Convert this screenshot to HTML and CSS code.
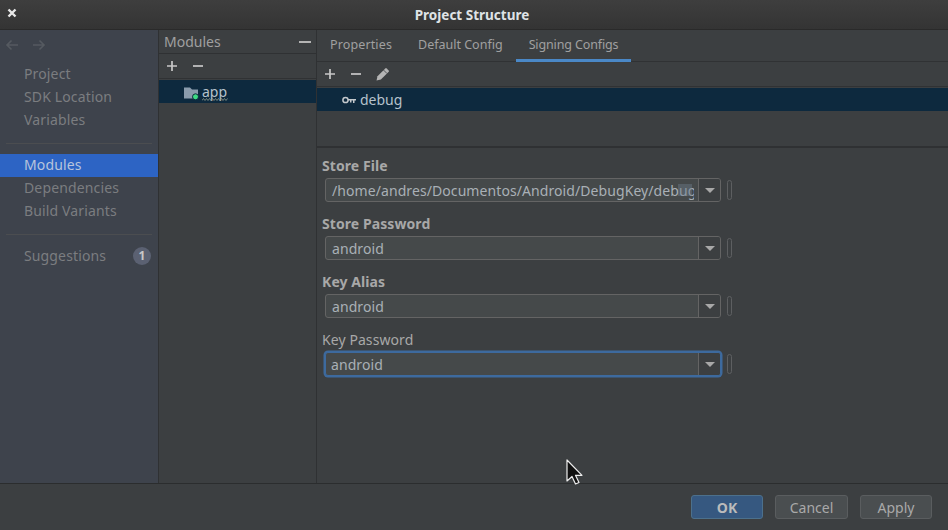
FILE: index.html
```html
<!DOCTYPE html>
<html lang="en">
<head>
<meta charset="utf-8">
<title>Project Structure</title>
<link rel="stylesheet" href="styles.css">
</head>
<body>
<div class="window">
  <header class="titlebar">
    <svg class="close" width="10" height="10" viewBox="0 0 10 10"><path d="M1.5 1.5l7 7M8.500 1.500l-7 7" stroke="#e8e8e8" stroke-width="2.400"/></svg>
    <div class="title">Project Structure</div>
  </header>
  <div class="main">
    <nav class="sidebar">
      <div class="history">
        <svg width="14" height="12" viewBox="0 0 14 12"><path d="M13 6H2M6.500 1.500L2 6l4.500 4.500" fill="none" stroke="#555a60" stroke-width="1.600"/></svg>
        <svg width="14" height="12" viewBox="0 0 14 12"><path d="M1 6h11M7.500 1.500L12 6l-4.500 4.500" fill="none" stroke="#555a60" stroke-width="1.600"/></svg>
      </div>
      <div class="nav-item">Project</div>
      <div class="nav-item">SDK Location</div>
      <div class="nav-item">Variables</div>
      <div class="nav-sep"></div>
      <div class="nav-item raised selected">Modules</div>
      <div class="nav-item raised">Dependencies</div>
      <div class="nav-item raised">Build Variants</div>
      <div class="nav-sep second"></div>
      <div class="nav-item with-badge">Suggestions<span class="badge">1</span></div>
    </nav>
    <section class="modules">
      <div class="modules-head"><span>Modules</span><i class="dash"></i></div>
      <div class="toolbar tool-modules">
        <svg width="12" height="12" viewBox="0 0 12 12"><path d="M6 1v10M1 6h10" stroke="#c8c8c8" stroke-width="1.700"/></svg>
        <svg width="12" height="12" viewBox="0 0 12 12"><path d="M1 6h10" stroke="#c8c8c8" stroke-width="1.700"/></svg>
      </div>
      <div class="tree-row app-row">
        <svg class="folder" width="15" height="16" viewBox="0 0 15 16"><path d="M0 3.500h6l2 2h6v9H0z" fill="#8a9bac"/><circle cx="11.500" cy="12.800" r="3" fill="#3ddc84" stroke="#0d293e" stroke-width="1"/></svg>
        <span class="app-name">app<svg class="squiggle" width="26" height="3" viewBox="0 0 26 3"><path d="M0 2.500l1.500-2 1.500 2 1.500-2 1.500 2 1.500-2 1.500 2 1.500-2 1.500 2 1.500-2 1.500 2 1.500-2 1.500 2 1.500-2 1.500 2 1.500-2 1.500 2 1.500-2" fill="none" stroke="#8f9a8e" stroke-width=".8"/></svg></span>
      </div>
    </section>
    <section class="content">
      <div class="tabs">
        <div class="tab first">Properties</div>
        <div class="tab">Default Config</div>
        <div class="tab active">Signing Configs</div>
      </div>
      <div class="toolbar tool-config">
        <svg width="12" height="12" viewBox="0 0 12 12"><path d="M6 1v10M1 6h10" stroke="#c8c8c8" stroke-width="1.700"/></svg>
        <svg width="12" height="12" viewBox="0 0 12 12"><path d="M1 6h10" stroke="#c8c8c8" stroke-width="1.700"/></svg>
        <svg width="14" height="14" viewBox="0 0 14 14"><path d="M0.500 13.500l1-4.300L9.300 1.400a1 1 0 0 1 1.400 0l2 2a1 1 0 0 1 0 1.400L4.900 12.500z" fill="#b4b4b4"/><path d="M7.600 3.100l3.400 3.400" stroke="#3c3f41" stroke-width=".8"/></svg>
      </div>
      <div class="config-list">
        <div class="tree-row debug-row">
          <svg width="14" height="8" viewBox="0 0 14 8"><circle cx="3.500" cy="4" r="2.600" fill="none" stroke="#c4c8cc" stroke-width="1.500"/><path d="M6 3h8v1.600h-1.500V7h-1.500V4.600H9.500V6.500H8V4.600H6z" fill="#c4c8cc"/></svg>
          <span>debug</span>
        </div>
      </div>
      <form class="form">
        <div class="field">
          <label class="strong">Store File</label>
          <div class="field-row">
            <div class="combo"><span class="value clip">/home/andres/Documentos/Android/DebugKey/debug.jks</span><i class="file-mark"></i><span class="arrow"><i></i></span></div>
            <i class="pill"></i>
          </div>
        </div>
        <div class="field">
          <label class="strong">Store Password</label>
          <div class="field-row">
            <div class="combo"><span class="value">android</span><span class="arrow"><i></i></span></div>
            <i class="pill"></i>
          </div>
        </div>
        <div class="field">
          <label class="strong">Key Alias</label>
          <div class="field-row">
            <div class="combo"><span class="value">android</span><span class="arrow"><i></i></span></div>
            <i class="pill"></i>
          </div>
        </div>
        <div class="field">
          <label>Key Password</label>
          <div class="field-row">
            <div class="combo focused"><span class="value">android</span><span class="arrow"><i></i></span></div>
            <i class="pill"></i>
          </div>
        </div>
      </form>
    </section>
  </div>
  <footer class="footer">
    <button class="btn primary" type="button">OK</button>
    <button class="btn cancel" type="button">Cancel</button>
    <button class="btn apply" type="button">Apply</button>
  </footer>
  <svg class="cursor" width="20" height="28" viewBox="0 0 20 28"><path d="M2 1v21l5-4.500 3.500 7.500 3.500-1.500-3.500-7.200h6.500z" fill="#111" stroke="#eee" stroke-width="1.200" stroke-linejoin="round"/></svg>
</div>
</body>
</html>
```
FILE: styles.css
```css
* { box-sizing: border-box; }
html, body { margin: 0; padding: 0; }
body {
  width: 948px;
  height: 530px;
  overflow: hidden;
  background: #3c3f41;
  font-family: "Noto Sans", sans-serif;
  font-size: 14px;
  color: #a9a9a9;
}
.window {
  position: relative;
  width: 948px;
  height: 530px;
  display: flex;
  flex-direction: column;
}
.titlebar {
  height: 30px;
  flex: none;
  display: flex;
  align-items: center;
  justify-content: center;
  position: relative;
  background: linear-gradient(#3e3e3e, #343434);
  border-bottom: 1px solid #2a2a2a;
}
.close { position: absolute; left: 7px; top: 8px; }
.title { font-weight: 700; font-size: 13.500px; color: #dfe3e6; transform: translateX(-2px); }
.main { flex: 1; display: flex; min-height: 0; }
.sidebar {
  width: 159px;
  flex: none;
  background: #3e434c;
  border-right: 1px solid #2f3133;
  color: #7b7d80;
  letter-spacing: .14px;
}
.history { height: 29px; display: flex; align-items: center; gap: 13px; padding: 0 0 0 5px; }
.nav-item { height: 23px; line-height: 23px; padding-left: 24px; margin-top: 0; }
.history + .nav-item { margin-top: 3px; }
.nav-item.raised { line-height: 21px; }
.nav-sep { height: 1px; background: #4b4d50; margin: 12px 6px 10px; }
.nav-sep.second { margin: 11px 6px 9px; }
.selected { background: #2d64c4; color: #b8c4dc; }
.with-badge { display: flex; justify-content: space-between; align-items: center; padding-right: 7px; }
.badge {
  width: 18px; height: 18px; border-radius: 50%;
  background: #5b6172; color: #c8c8c8;
  font-size: 12px; font-weight: 700; line-height: 18px; text-align: center;
}
.modules {
  width: 158px;
  flex: none;
  background: #3c3f41;
  border-right: 1px solid #2f3133;
}
.modules-head {
  height: 24px;
  display: flex;
  align-items: center;
  justify-content: space-between;
  padding: 0 5px;
  border-bottom: 1px solid #2f3133;
  color: #a0a0a0;
}
.dash { width: 12px; height: 2px; background: #b4b4b4; }
.toolbar { display: flex; align-items: center; border-bottom: 1px solid #303234; }
.tool-modules { height: 25px; gap: 14px; padding-left: 7px; }
.tree-row { height: 23px; background: #0d293e; display: flex; align-items: center; color: #b6c2cc; }
.app-row { margin-top: 1px; padding-left: 25px; gap: 3px; }
.app-name { position: relative; }
.squiggle { position: absolute; left: 0; bottom: 0; }
.content { flex: 1; display: flex; flex-direction: column; min-width: 0; background: #3c3f41; }
.tabs { height: 32px; flex: none; display: flex; padding-left: 0; border-bottom: 1px solid #303234; font-size: 12.500px; }
.tab { padding: 0 13px; line-height: 29px; color: #a0a0a0; height: 32px; }
.tab.first { letter-spacing: .13px; }
.tab.active { border-bottom: 3px solid #4a88c7; letter-spacing: -.13px; }
.tool-config { height: 25px; gap: 14px; padding-left: 7px; flex: none; }
.config-list { height: 61px; flex: none; padding-top: 1px; border-bottom: 2px solid #2f3133; }
.debug-row { padding-left: 25px; gap: 4px; }
.form { flex: 1; padding: 8px 0 0 5px; border-bottom: 0; }
.field { height: 58px; letter-spacing: .08px; }
.field label { display: block; height: 22px; line-height: 20px; color: #a8a8a8; }
.field .strong { font-weight: 700; }
.field-row { display: flex; align-items: center; gap: 6px; padding-left: 3px; }
.combo {
  width: 396px;
  height: 24px;
  position: relative;
  display: flex;
  align-items: center;
  background: #45494a;
  border: 1px solid #646464;
  border-radius: 3px;
}
.value { flex: 1; min-width: 0; padding-left: 6px; color: #a9b0b6; white-space: nowrap; }
.clip { overflow: hidden; margin-right: 4px; }
.file-mark { position: absolute; right: 28px; top: 5px; width: 14px; height: 12px; background: #6a7a8a; opacity: .45; }
.arrow {
  width: 22px;
  height: 100%;
  flex: none;
  border-left: 1px solid #646464;
  display: flex;
  align-items: center;
  justify-content: center;
  background: #3c3f41;
  border-radius: 0 2px 2px 0;
}
.arrow i { width: 0; height: 0; border-left: 5px solid transparent; border-right: 5px solid transparent; border-top: 5px solid #a8a8a8; }
.focused { border-color: #3d6a9e; box-shadow: 0 0 0 1.500px #3d6a9e; }
.focused .value { padding-left: 5px; }
.pill { width: 5px; height: 20px; border: 1px solid #5d5f61; border-radius: 3px; }
.footer {
  height: 47px;
  flex: none;
  display: flex;
  align-items: flex-start;
  padding: 11px 16px 0 0;
  justify-content: flex-end;
  border-top: 1px solid #2b2d2e;
  background: #3c3f41;
}
.btn {
  height: 24px;
  font: inherit;
  padding: 0;
  border-radius: 3px;
  border: 1px solid #5a5d5f;
  background: #4a4e50;
  color: #a9a9a9;
}
.primary { width: 72px; background: #365880; border-color: #4c708c; color: #bbbbbb; font-weight: 700; margin-right: 12px; }
.cancel { width: 73px; margin-right: 12px; }
.apply { width: 72px; }
.cursor { position: absolute; left: 565px; top: 459px; }
```
